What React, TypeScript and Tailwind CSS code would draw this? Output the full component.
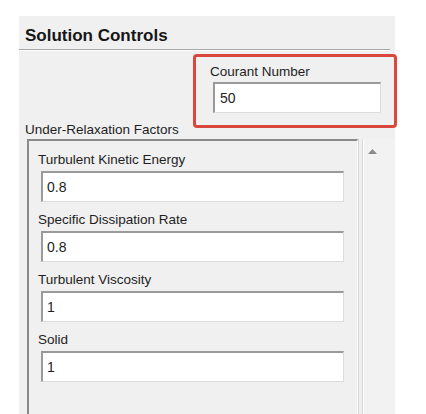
import React from "react";

const font = { fontFamily: '"Liberation Sans", Arial, sans-serif' };

function Field({ label, value }: { label: string; value: string }) {
  return (
    <div className="flex flex-col">
      <div className="h-[16px] text-[13.5px] leading-[16px] text-[#1e1e1e]">{label}</div>
      <div className="mt-[3px] ml-[3px] w-[303px] h-[31px] bg-white border-t-2 border-l-2 border-b border-r border-t-[#9a9a9a] border-l-[#9a9a9a] border-b-[#dcdcdc] border-r-[#dcdcdc] flex items-center pl-[4px] text-[14px] text-[#1e1e1e]">
        {value}
      </div>
    </div>
  );
}

export default function App() {
  return (
    <div className="relative w-[426px] h-[414px] bg-white overflow-hidden pl-[19px] pt-[16px]" style={font}>
      <div className="w-[376px] h-[398px] bg-[#f0f0f0] flex flex-col">
        <div className="pt-[10px] pl-[6px] h-[30px] text-[17px] leading-[20px] font-bold text-[#161616]">
          Solution Controls
        </div>
        <div className="mt-[3px] mr-[5px] h-[1px] bg-[#a8a8a8]" />
        <div className="h-[1px] mr-[5px] bg-white" />
        <div className="flex flex-col ml-[191px] mt-[13px]">
          <div className="h-[16px] text-[13.5px] leading-[16px] text-[#1e1e1e]">Courant Number</div>
          <div className="mt-[2px] ml-[3px] w-[168px] h-[31px] bg-white border-t-2 border-l-2 border-b border-r border-t-[#9a9a9a] border-l-[#9a9a9a] border-b-[#dcdcdc] border-r-[#dcdcdc] flex items-center pl-[5px] text-[14px] text-[#1e1e1e]">
            50
          </div>
        </div>
        <div className="ml-[6px] mt-[9px] h-[16px] text-[13.5px] leading-[16px] text-[#1e1e1e]">
          Under-Relaxation Factors
        </div>
        <div className="flex flex-1 mt-[1px]">
          <div className="ml-[8px] w-[331px] border-t-2 border-l-2 border-r border-t-[#8a8a8a] border-l-[#8a8a8a] border-r-white pt-[11px] pl-[9px] flex flex-col gap-[10px]">
            <Field label="Turbulent Kinetic Energy" value="0.8" />
            <Field label="Specific Dissipation Rate" value="0.8" />
            <Field label="Turbulent Viscosity" value="1" />
            <Field label="Solid" value="1" />
          </div>
          <div className="w-[1px] bg-[#d4d4d4]" />
          <div className="ml-[3px] w-[1px] bg-[#d8d8d8]" />
          <div className="w-[1px] bg-white" />
          <div className="flex-1 bg-[#f2f2f2] flex justify-center pt-[10px] pr-[14px]">
            <svg width="9" height="5" viewBox="0 0 9 5">
              <polygon points="4.5,0 9,5 0,5" fill="#8a8a8a" />
            </svg>
          </div>
        </div>
      </div>
      <div className="absolute left-[193px] top-[54px] w-[204px] h-[74px] border-[3px] border-[#d9473d] rounded-[4px]" />
    </div>
  );
}
